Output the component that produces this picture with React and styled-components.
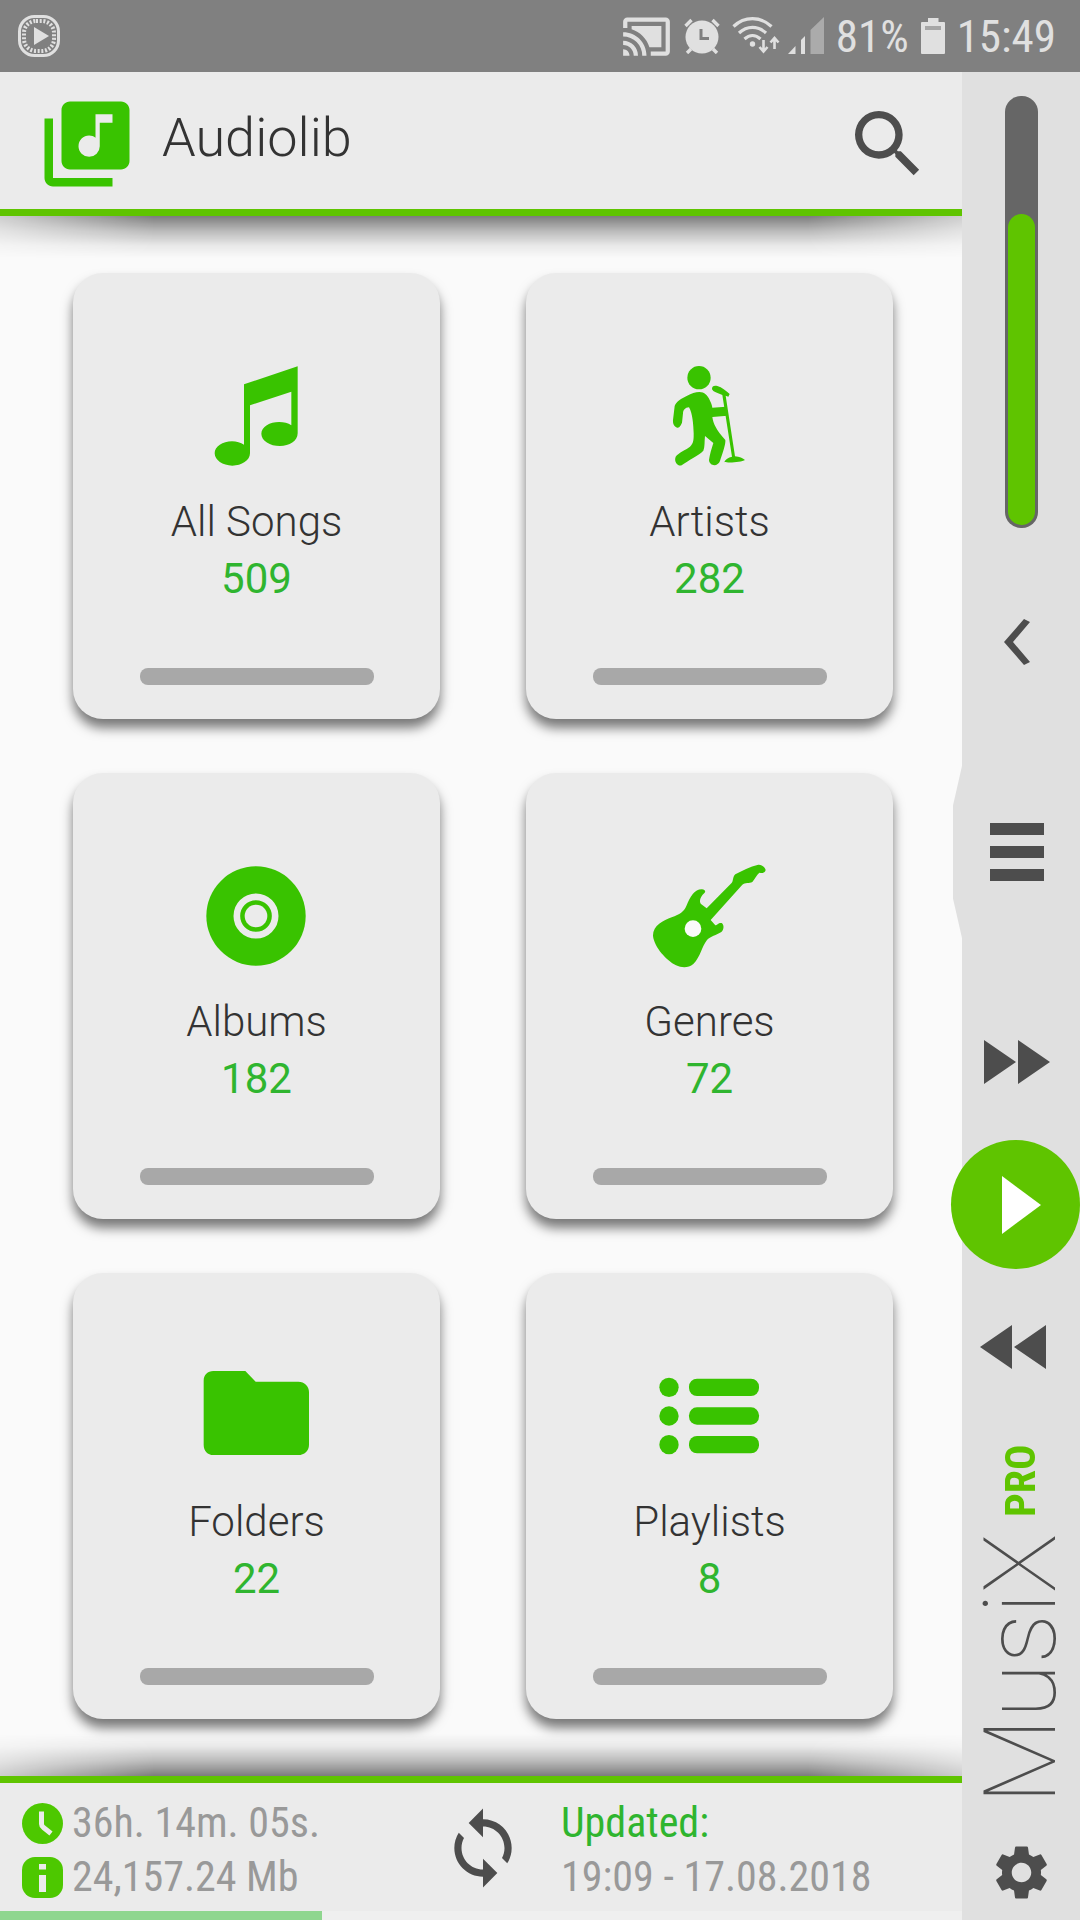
import React, { useState } from 'react';
import styled, { createGlobalStyle } from 'styled-components';
import { MdCastConnected, MdLibraryMusic, MdSearch, MdSettings, MdSync } from 'react-icons/md';

const colors = {
  accent: '#5fc400',
  icon: '#39c300',
  count: '#2fb52f',
  ink: '#4d4d4d',
  text: '#333333',
  muted: '#999999',
  panel: '#ebebeb',
  rail: '#e0e0e0',
  page: '#fafafa',
  status: '#e0e0e0',
};

const GlobalStyle = createGlobalStyle`
  *, *::before, *::after {
    box-sizing: border-box;
  }

  body {
    margin: 0;
    background: ${colors.page};
    font-family: Roboto, "Liberation Sans", sans-serif;
  }

  button {
    padding: 0;
    border: 0;
    background: none;
    color: inherit;
    font: inherit;
    cursor: pointer;
  }

  svg {
    display: block;
    flex: none;
  }
`;

const Page = styled.div`
  display: flex;
  flex-direction: column;
  min-height: 100vh;
`;

const Body = styled.div`
  display: flex;
  flex: 1;
`;

/* Status bar */

const StatusBar = styled.div`
  display: flex;
  align-items: center;
  justify-content: space-between;
  height: 72px;
  padding: 0 24px 0 18px;
  background: #808080;
  color: ${colors.status};
  font-family: "Roboto Condensed", Roboto, sans-serif;
  font-size: 45px;
`;

const StatusGroup = styled.div`
  display: flex;
  align-items: center;
  gap: ${(props) => props.$gap || 12}px;
`;

/* Main column */

const Main = styled.main`
  display: flex;
  flex: 1;
  flex-direction: column;
  min-width: 0;
`;

const Header = styled.header`
  position: relative;
  display: flex;
  align-items: center;
  height: 144px;
  padding: 6px 30px 0 36px;
  border-bottom: 7px solid ${colors.accent};
  background: ${colors.panel};
  color: ${colors.icon};
`;

const Title = styled.h1`
  flex: 1;
  margin: 0 0 12px 24px;
  color: ${colors.text};
  font-size: 54px;
  font-weight: 300;
  line-height: 64px;
`;

const IconButton = styled.button`
  display: flex;
  align-items: center;
  justify-content: center;
  color: ${colors.ink};
`;

const EdgeShadow = styled.div`
  position: absolute;
  left: 0;
  right: 0;
  ${(props) => (props.$up ? 'bottom: 100%' : 'top: 100%')};
  height: 42px;
  margin: ${(props) => (props.$up ? '0 0 7px' : '7px 0 0')};
  background: linear-gradient(
    ${(props) => (props.$up ? 'to top' : 'to bottom')},
    rgba(0, 0, 0, .5),
    rgba(0, 0, 0, .26) 35%,
    rgba(0, 0, 0, .07) 70%,
    transparent
  );
  mask-image: linear-gradient(to right, rgba(0, 0, 0, .35), #000 16%, #000 84%, rgba(0, 0, 0, .35));
  pointer-events: none;
`;

const Grid = styled.div`
  display: grid;
  flex: 1;
  grid-template-columns: 1fr 1fr;
  align-content: start;
  gap: 54px 86px;
  padding: 57px 69px 57px 73px;
`;

const Card = styled.button`
  display: flex;
  flex-direction: column;
  align-items: center;
  height: 446px;
  padding: 83px 0 34px;
  border-radius: 30px;
  background: ${colors.panel};
  box-shadow: 0 9px 12px rgba(0, 0, 0, .52);
`;

const CardLabel = styled.span`
  margin-top: 17px;
  color: ${colors.text};
  font-size: 42px;
  font-weight: 300;
  line-height: 57px;
`;

const CardCount = styled.span`
  color: ${colors.count};
  font-size: 42px;
  line-height: 57px;
`;

const CardGrip = styled.span`
  width: 234px;
  max-width: 64%;
  height: 17px;
  margin-top: auto;
  border-radius: 8px;
  background: #a8a8a8;
`;

/* Footer */

const Footer = styled.footer`
  position: relative;
  display: grid;
  grid-template-columns: 1fr 86px 1fr;
  align-items: start;
  height: 135px;
  padding: 13px 18px 0 22px;
  border-top: 7px solid ${colors.accent};
  background: ${colors.panel};
  color: ${colors.muted};
  font-family: "Roboto Condensed", Roboto, sans-serif;
  font-size: 42px;
  line-height: 54px;
  white-space: nowrap;
`;

const SyncButton = styled(IconButton)`
  height: 104px;
`;

const Stat = styled.div`
  display: flex;
  align-items: center;
  gap: 9px;
`;

const Updated = styled.div`
  padding-left: 35px;
`;

const UpdatedLabel = styled.div`
  color: ${colors.count};
`;

const Progress = styled.div`
  height: 9px;
  background: #efefef;
`;

const ProgressFill = styled.div`
  height: 100%;
  background: #8fd68f;
`;

/* Side rail */

const Rail = styled.aside`
  position: relative;
  z-index: 1;
  display: flex;
  flex: none;
  flex-direction: column;
  align-items: center;
  width: 118px;
  padding: 24px 0 18px;
  background: ${colors.rail};
`;

const Volume = styled.label`
  position: relative;
  display: flex;
  align-items: flex-end;
  width: 33px;
  height: 432px;
  margin-bottom: 84px;
  padding: 3px;
  border-radius: 16px;
  background: #666666;
`;

const VolumeFill = styled.span`
  width: 100%;
  border-radius: 14px;
  background: ${colors.accent};
`;

const VolumeInput = styled.input`
  position: absolute;
  inset: 0;
  width: 100%;
  height: 100%;
  margin: 0;
  opacity: 0;
  writing-mode: vertical-lr;
  direction: rtl;
`;

const RailButton = styled(IconButton)`
  width: 100%;
  height: 60px;
  padding-right: ${(props) => props.$inset || 0}px;
`;

const MenuButton = styled(RailButton)`
  position: relative;
  margin: 150px 0;

  &::before {
    content: "";
    position: absolute;
    top: -56px;
    right: 100%;
    width: 9px;
    height: 172px;
    background: ${colors.rail};
    clip-path: polygon(100% 0, 0 23%, 0 77%, 100% 100%);
  }
`;

const Transport = styled.div`
  display: flex;
  flex-direction: column;
  align-items: flex-end;
  gap: 48px;
  width: 100%;
`;

const PlayButton = styled.button`
  display: flex;
  flex: none;
  align-items: center;
  justify-content: center;
  width: 129px;
  height: 129px;
  padding-left: 12px;
  border-radius: 50%;
  background: ${colors.accent};
`;

const Brand = styled.div`
  display: flex;
  flex-direction: row;
  align-items: center;
  gap: 16px;
  margin: auto 0 38px;
  writing-mode: vertical-rl;
  transform: rotate(180deg);
`;

const BrandName = styled.span`
  color: ${colors.ink};
  font-size: 100px;
  font-weight: 100;
  line-height: 118px;
`;

const BrandTag = styled.span`
  color: ${colors.accent};
  font-family: "Roboto Condensed", Roboto, sans-serif;
  font-size: 42px;
  font-weight: 700;
  line-height: 52px;
`;

const PlayingIcon = () => (
  <svg width="42" height="42" viewBox="0 0 42 42" fill="none" stroke="currentColor">
    <rect x="1.5" y="1.5" width="39" height="39" rx="15" strokeWidth="3" />
    <rect x="6" y="6" width="30" height="30" rx="12" strokeWidth="4" strokeDasharray="2 1.7" />
    <path d="M16 12l15 9-15 9z" fill="currentColor" stroke="none" />
  </svg>
);

const AlarmIcon = () => (
  <svg width="36" height="36" viewBox="0 0 36 36" fill="none" stroke="currentColor">
    <circle cx="18" cy="19" r="16.5" fill="currentColor" stroke="none" />
    <path d="M1.5 8l6-6M34.5 8l-6-6M7 31l-4 4M29 31l4 4" strokeWidth="3.4" />
    <path d="M17 11v9.500h8" stroke="#808080" strokeWidth="3" />
  </svg>
);

const WifiIcon = () => (
  <svg width="48" height="38" viewBox="0 0 48 38" fill="none" stroke="currentColor">
    <path d="M1.500 9.500c11-10.500 27-10.500 38 0M7 16c8-7.500 19-7.500 27 0M12.500 22c5-4.500 11-4.500 16 0" strokeWidth="3.200" />
    <circle cx="20.500" cy="27" r="2.700" fill="currentColor" stroke="none" />
    <path d="M31.500 23v11M27.500 30l4 4.500 4-4.500M42.500 32V21M38.500 25.500l4-4.500 4 4.500" strokeWidth="2.600" />
  </svg>
);

const SignalIcon = () => (
  <svg width="36" height="38" viewBox="0 0 36 38" fill="currentColor">
    <path d="M0 37l7.500-8v8zM13 23l4-4v18h-4z" />
    <path d="M22.500 13L36 0v37H22.500z" opacity=".45" />
  </svg>
);

const BatteryIcon = () => (
  <svg width="24" height="36" viewBox="0 0 24 36" fill="currentColor">
    <path d="M7 0h10.500v4H23q1 0 1 1v30q0 1-1 1H1q-1 0-1-1V5q0-1 1-1h6z" />
    <path d="M4 8h16v4H4z" fill="#a6a6a6" />
  </svg>
);

const SongsIcon = () => (
  <svg width="120" height="120" viewBox="411 288 360 360" fill={colors.icon}>
    <path d="M552 373L713 319V520C713 544 688 558 660 558C630 558 604 542 604 521C604 500 630 486 657 486C672 486 684 489 694 496V395L570 436V580C570 601 545 617 517 617C488 617 464 600 464 580C464 559 488 544 516 544C530 544 542 548 552 554Z" />
  </svg>
);

const ArtistsIcon = () => (
  <svg width="120" height="120" viewBox="420 288 360 360" fill={colors.icon}>
    <circle cx="567" cy="353" r="35" />
    <path d="M568 396C584 396 592 406 598 418C603 428 606 436 607 443L648 440L652 467L607 471C610 492 618 508 646 540C648 552 636 585 630 603C624 621 598 619 597 600C599 585 605 565 610 549L585 528C583 545 585 560 580 572C565 588 535 600 515 616C503 620 491 605 497 590C505 578 530 568 540 560C552 550 551 535 551 520C550 495 548 460 537 442C525 443 519 450 519 460L516 488C511 500 507 503 502 503C492 500 488 490 489 480L494 438C498 425 515 415 530 408C545 400 556 396 568 396Z" />
    <path d="M606 388C605 377 614 376 622 378C636 382 647 392 659 402L655 410L647 407L675 589C688 590 699 595 705 600C695 607 655 609 643 606C646 598 655 592 666 590L637 405C628 402 616 396 610 393Z" />
  </svg>
);

const AlbumsIcon = () => (
  <svg width="120" height="120" viewBox="411 288 360 360" fill={colors.icon}>
    <circle cx="588" cy="468" r="149" />
    <circle cx="588" cy="468" r="57.500" fill="none" stroke={colors.panel} strokeWidth="20" />
    <circle cx="588" cy="468" r="34" fill={colors.panel} />
  </svg>
);

const GenresIcon = () => (
  <svg width="120" height="120" viewBox="420 288 360 360" fill={colors.icon}>
    <path d="M429 528C428 497 460 481 485 472C510 463 521 457 530 436C540 410 555 387 576 388C584 389 588 394 584 398C570 410 566 425 574 433L590 445L664 370C671 364 667 351 676 343C695 332 720 320 745 314C756 313 765 322 767 330C764 340 757 340 748 338C740 345 734 358 727 366C718 371 705 367 697 374L602 480L616 496C622 496 624 488 635 489C643 495 642 508 634 516C620 525 600 530 591 540C575 560 572 590 550 612C535 625 515 624 498 616C470 602 433 562 429 528Z" />
    <circle cx="549" cy="506" r="25" fill={colors.page} />
  </svg>
);

const FoldersIcon = () => (
  <svg width="120" height="120" viewBox="411 288 360 360" fill={colors.icon}>
    <path d="M431 362C431 345 443 333 460 333H556L587 365H715C733 365 747 379 747 396V554C747 572 733 585 715 585H460C443 585 431 572 431 554Z" />
  </svg>
);

const PlaylistsIcon = () => (
  <svg width="120" height="120" viewBox="420 288 360 360" fill={colors.icon}>
    {[382, 468, 554].map((y) => (
      <React.Fragment key={y}>
        <circle cx="477" cy={y} r="29" />
        <rect x="537" y={y - 26} width="210" height="52" rx="24" />
      </React.Fragment>
    ))}
  </svg>
);

const ClockIcon = () => (
  <svg width="41" height="41" viewBox="0 0 41 41" fill="#4dc800">
    <circle cx="20.500" cy="20.500" r="20.500" />
    <path d="M19.500 8.500v12.500q0 2 2 3.500l7.500 6" fill="none" stroke={colors.panel} strokeWidth="5" />
  </svg>
);

const InfoIcon = () => (
  <svg width="41" height="41" viewBox="0 0 41 41" fill="#4dc800">
    <rect width="41" height="41" rx="13" />
    <path d="M17 7h7v5.500h-7zM17 18h7v17h-7z" fill={colors.panel} />
  </svg>
);

const ChevronIcon = () => (
  <svg width="26" height="48" viewBox="0 0 26 48" fill={colors.ink}>
    <path d="M0 24L20 1L26 4L9 24L26 44L20 47Z" />
  </svg>
);

const MenuIcon = () => (
  <svg width="54" height="58" viewBox="0 0 54 58" fill={colors.ink}>
    <path d="M0 0h54v12H0zM0 23h54v12H0zM0 46h54v12H0z" />
  </svg>
);

const ForwardIcon = () => (
  <svg width="66" height="44" viewBox="0 0 66 44" fill={colors.ink}>
    <path d="M0 0L32 22L0 44ZM34 0L66 22L34 44Z" />
  </svg>
);

const RewindIcon = () => (
  <svg width="66" height="44" viewBox="0 0 66 44" fill={colors.ink}>
    <path d="M32 0L0 22L32 44ZM66 0L34 22L66 44Z" />
  </svg>
);

const PlayIcon = () => (
  <svg width="39" height="58" viewBox="0 0 39 58" fill="#ffffff">
    <path d="M0 0L39 29L0 58Z" />
  </svg>
);

const categories = [
  { label: 'All Songs', count: 509, Icon: SongsIcon },
  { label: 'Artists', count: 282, Icon: ArtistsIcon },
  { label: 'Albums', count: 182, Icon: AlbumsIcon },
  { label: 'Genres', count: 72, Icon: GenresIcon },
  { label: 'Folders', count: 22, Icon: FoldersIcon },
  { label: 'Playlists', count: 8, Icon: PlaylistsIcon },
];

const VolumeSlider = () => {
  const [volume, setVolume] = useState(73);

  return (
    <Volume>
      <VolumeFill style={{ height: `${volume}%` }} />
      <VolumeInput
        type="range"
        aria-label="Volume"
        value={volume}
        onChange={(event) => setVolume(Number(event.target.value))}
      />
    </Volume>
  );
};

const App = () => (
  <Page>
    <GlobalStyle />

    <StatusBar>
      <PlayingIcon />
      <StatusGroup>
        <MdCastConnected size={51} />
        <AlarmIcon />
        <StatusGroup $gap={8}>
          <WifiIcon />
          <SignalIcon />
        </StatusGroup>
        <span>81%</span>
        <BatteryIcon />
        <span>15:49</span>
      </StatusGroup>
    </StatusBar>

    <Body>
      <Main>
        <Header>
          <MdLibraryMusic size={102} />
          <Title>Audiolib</Title>
          <IconButton type="button" aria-label="Search">
            <MdSearch size={88} />
          </IconButton>
          <EdgeShadow />
        </Header>

        <Grid>
          {categories.map(({ label, count, Icon }) => (
            <Card key={label} type="button">
              <Icon />
              <CardLabel>{label}</CardLabel>
              <CardCount>{count}</CardCount>
              <CardGrip />
            </Card>
          ))}
        </Grid>

        <Footer>
          <EdgeShadow $up />
          <div>
            <Stat>
              <ClockIcon />
              36h. 14m. 05s.
            </Stat>
            <Stat>
              <InfoIcon />
              24,157.24 Mb
            </Stat>
          </div>
          <SyncButton type="button" aria-label="Rescan library">
            <MdSync size={86} />
          </SyncButton>
          <Updated>
            <UpdatedLabel>Updated:</UpdatedLabel>
            <div>19:09 - 17.08.2018</div>
          </Updated>
        </Footer>
        <Progress>
          <ProgressFill style={{ width: '33.5%' }} />
        </Progress>
      </Main>

      <Rail>
        <VolumeSlider />
        <RailButton type="button" aria-label="Back" $inset={8}>
          <ChevronIcon />
        </RailButton>
        <MenuButton type="button" aria-label="Menu" $inset={8}>
          <MenuIcon />
        </MenuButton>
        <Transport>
          <RailButton type="button" aria-label="Next track" $inset={8}>
            <ForwardIcon />
          </RailButton>
          <PlayButton type="button" aria-label="Play">
            <PlayIcon />
          </PlayButton>
          <RailButton type="button" aria-label="Previous track" $inset={16}>
            <RewindIcon />
          </RailButton>
        </Transport>
        <Brand>
          <BrandName>MusiX</BrandName>
          <BrandTag>PRO</BrandTag>
        </Brand>
        <RailButton type="button" aria-label="Settings">
          <MdSettings size={65} />
        </RailButton>
      </Rail>
    </Body>
  </Page>
);

export default App;
